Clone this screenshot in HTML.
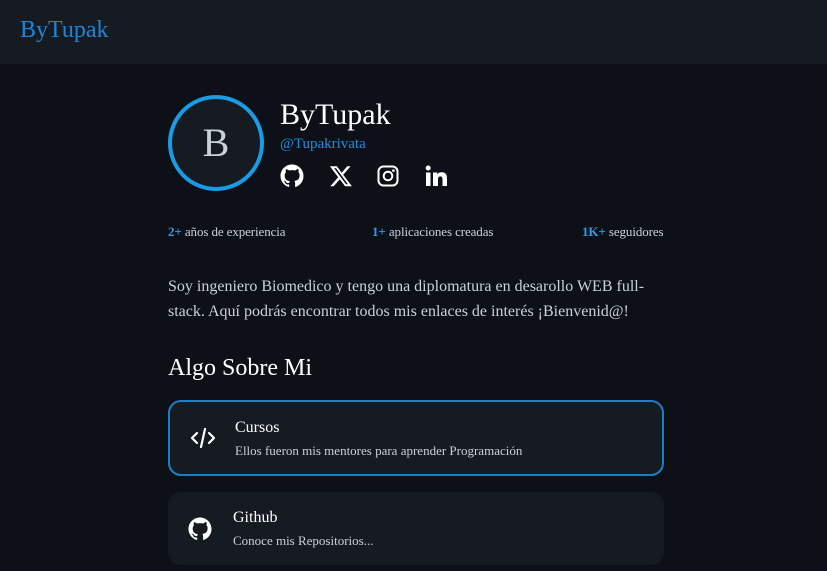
<!DOCTYPE html>
<html><head><meta charset="utf-8"><style>
*{margin:0;padding:0;box-sizing:border-box}
body{width:827px;height:571px;overflow:hidden;background:#0d1117;font-family:"Liberation Serif",serif;color:#e6edf3;position:relative}
.hdr{position:absolute;left:0;top:0;width:827px;height:64px;background:#161b22}
.logo{position:absolute;left:20px;top:17px;font-size:24px;color:#1a86d9}
.av{position:absolute;left:168px;top:95px;width:96px;height:96px;border:4px solid #1a9be6;border-radius:50%;background:#161b22;color:#c9d1d9;font-size:40px;text-align:center;line-height:88px}
.name{position:absolute;left:280px;top:98px;font-size:30px;color:#fff}
.handle{position:absolute;left:280px;top:136px;font-size:15px;color:#1a8fe0}
.ic{position:absolute;top:164px;width:24px;height:24px}
.st{position:absolute;top:224px;font-size:13px;color:#c9d1d9;letter-spacing:-0.1px}
.st b{color:#2d9bf0}
.p{position:absolute;left:168px;top:274px;width:500px;font-size:16px;line-height:25px;color:#c9d1d9}
.h2{position:absolute;left:168px;top:355px;font-size:24px;color:#fff}
.card{position:absolute;left:168px;width:496px;background:#161b22;border-radius:13px}
.t{position:absolute;font-size:16px;color:#fff}
.s{position:absolute;font-size:13px;color:#c9d1d9}
</style></head><body>
<div class="hdr"><div class="logo">ByTupak</div></div>
<div class="av">B</div>
<div class="name">ByTupak</div>
<div class="handle">@Tupakrivata</div>
<svg class="ic" style="left:280px" viewBox="0 0 24 24"><path fill="#fff" d="M12 .5C5.6.5.5 5.6.5 12c0 5.1 3.3 9.4 7.9 10.9.6.1.8-.2.8-.5v-2c-3.2.7-3.9-1.4-3.9-1.4-.5-1.3-1.3-1.7-1.3-1.7-1-.7.1-.7.1-.7 1.2.1 1.8 1.2 1.8 1.2 1 1.8 2.7 1.3 3.4 1 .1-.8.4-1.3.7-1.6-2.6-.3-5.3-1.3-5.3-5.7 0-1.3.5-2.3 1.2-3.1-.1-.3-.5-1.5.1-3.1 0 0 1-.3 3.3 1.2a11.5 11.5 0 0 1 6 0C17.3 4.7 18.3 5 18.3 5c.6 1.6.2 2.8.1 3.1.8.8 1.2 1.8 1.2 3.1 0 4.4-2.7 5.4-5.3 5.7.4.4.8 1.1.8 2.2v3.3c0 .3.2.7.8.5A11.5 11.5 0 0 0 23.5 12C23.5 5.6 18.4.5 12 .5z"/></svg>
<svg class="ic" style="left:329px" viewBox="0 0 24 24"><path fill="#fff" d="M18.2 2.3h3.4l-7.4 8.4 8.7 11.5h-6.8l-5.3-7-6.1 7H1.3l7.9-9L.9 2.3h7l4.8 6.4zm-1.2 17.9h1.9L7.1 4.2H5.1z"/></svg>
<svg class="ic" style="left:376px" viewBox="0 0 24 24"><rect x="2.5" y="2.5" width="19" height="19" rx="5" fill="none" stroke="#fff" stroke-width="2"/><circle cx="12" cy="12" r="4.3" fill="none" stroke="#fff" stroke-width="2"/><circle cx="17.4" cy="6.6" r="1.3" fill="#fff"/></svg>
<svg class="ic" style="left:424px" viewBox="0 0 24 24"><path fill="#fff" d="M2 8.5h4.5V22H2zM4.2 1.5a2.5 2.5 0 1 1 0 5 2.5 2.5 0 0 1 0-5zM9 8.5h4.3v1.9c.6-1.1 2.1-2.2 4.3-2.2 4.6 0 5.4 3 5.4 6.9V22h-4.5v-6.2c0-1.5 0-3.4-2.1-3.4s-2.4 1.6-2.4 3.3V22H9z"/></svg>
<div class="st" style="left:168px"><b>2+</b> años de experiencia</div>
<div class="st" style="left:372px"><b>1+</b> aplicaciones creadas</div>
<div class="st" style="left:582px"><b>1K+</b> seguidores</div>
<div class="p">Soy ingeniero Biomedico y tengo una diplomatura en desarollo WEB full-stack. Aquí podrás encontrar todos mis enlaces de interés ¡Bienvenid@!</div>
<div class="h2">Algo Sobre Mi</div>
<div class="card" style="top:400px;height:76px;border:2px solid #1a7fc7">
<svg style="position:absolute;left:20px;top:24px" width="26" height="24" viewBox="0 0 26 24"><path d="M7 7l-5 5 5 5M19 7l5 5-5 5M15 3l-4 18" fill="none" stroke="#fff" stroke-width="2.2" stroke-linecap="round" stroke-linejoin="round"/></svg>
<div class="t" style="left:65px;top:17px">Cursos</div>
<div class="s" style="left:65px;top:41px">Ellos fueron mis mentores para aprender Programación</div>
</div>
<div class="card" style="top:492px;height:73px">
<svg style="position:absolute;left:20px;top:25px" width="24" height="24" viewBox="0 0 24 24"><path fill="#fff" d="M12 .5C5.6.5.5 5.6.5 12c0 5.1 3.3 9.4 7.9 10.9.6.1.8-.2.8-.5v-2c-3.2.7-3.9-1.4-3.9-1.4-.5-1.3-1.3-1.7-1.3-1.7-1-.7.1-.7.1-.7 1.2.1 1.8 1.2 1.8 1.2 1 1.8 2.7 1.3 3.4 1 .1-.8.4-1.3.7-1.6-2.6-.3-5.3-1.300-5.3-5.7 0-1.3.5-2.3 1.2-3.1-.1-.3-.5-1.5.1-3.1 0 0 1-.3 3.3 1.2a11.5 11.5 0 0 1 6 0C17.3 4.7 18.3 5 18.3 5c.6 1.6.2 2.8.1 3.1.8.8 1.2 1.8 1.2 3.1 0 4.4-2.7 5.4-5.3 5.7.4.4.8 1.1.8 2.2v3.3c0 .3.2.7.8.5A11.5 11.5 0 0 0 23.5 12C23.5 5.6 18.4.5 12 .5z"/></svg>
<div class="t" style="left:65px;top:17px">Github</div>
<div class="s" style="left:65px;top:41px">Conoce mis Repositorios...</div>
</div>
</body></html>
